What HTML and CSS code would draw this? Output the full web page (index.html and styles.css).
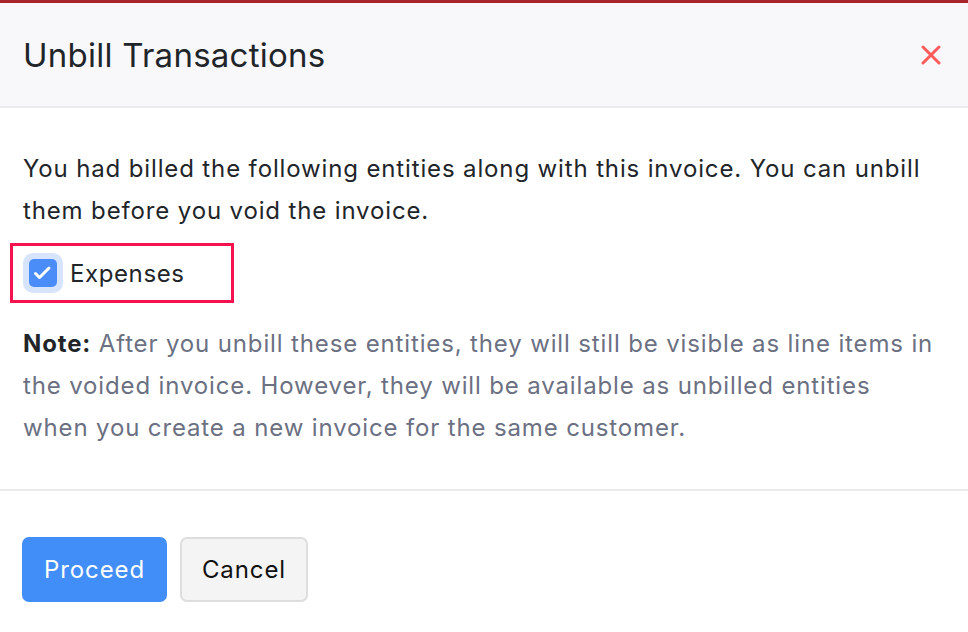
FILE: index.html
```html
<!DOCTYPE html>
<html lang="en">
<head>
    <meta charset="UTF-8">
    <title>Unbill Transactions</title>
    <link rel="stylesheet" href="styles.css">
</head>
<body>
    <div class="top-bar"></div>
    <header class="modal-header">
        <h1>Unbill Transactions</h1>
        <button class="close-btn" aria-label="Close">
            <svg width="20" height="20" viewBox="0 0 20 20"><path d="M2 2L18 18M18 2L2 18" stroke="#ff5a5a" stroke-width="3" stroke-linecap="round"/></svg>
        </button>
    </header>
    <main class="modal-body">
        <p>You had billed the following entities along with this invoice. You can unbill them before you void the invoice.</p>
        <label class="check-row">
            <span class="check-outer">
                <span class="check-inner">
                    <svg width="28" height="28" viewBox="0 0 28 28"><path d="M6.5 14.5L10.5 18.5L20 9" fill="none" stroke="#fff" stroke-width="3" stroke-linecap="round" stroke-linejoin="round"/></svg>
                </span>
            </span>
            Expenses
        </label>
        <p class="note"><strong>Note:</strong> After you unbill these entities, they will still be visible as line items in the voided invoice. However, they will be available as unbilled entities when you create a new invoice for the same customer.</p>
    </main>
    <footer class="modal-footer">
        <button class="btn btn-primary">Proceed</button>
        <button class="btn btn-default">Cancel</button>
    </footer>
</body>
</html>
```

FILE: styles.css
```css
body {
    margin: 0;
    font-family: 'Inter', 'Noto Sans', sans-serif;
    color: #212529;
    background: #fff;
    letter-spacing: 0.86px;
}

.top-bar {
    height: 3px;
    background-color: #a8242a;
}

/* Header */
.modal-header {
    height: 103px;
    background-color: #f8f8fa;
    border-bottom: 2px solid #ebebeb;
    display: flex;
    align-items: center;
    justify-content: space-between;
    padding: 0 23px;
}

.modal-header h1 {
    margin: 0;
    font-size: 33px;
    font-weight: 400;
    letter-spacing: 0.25px;
    color: #212529;
}

.close-btn {
    background: none;
    border: none;
    padding: 0;
    margin-right: 4px;
    cursor: pointer;
    display: flex;
}

/* Body */
.modal-body {
    padding: 40px 30px 40px 23px;
    border-bottom: 2px solid #ebebeb;
}

.modal-body p {
    margin: 0;
    font-size: 24px;
    line-height: 42px;
}

.check-row {
    display: inline-flex;
    align-items: center;
    gap: 7px;
    margin: 11px 0 20px -13px;
    padding: 0 46px 0 10px;
    height: 54px;
    border: 3px solid #f5124f;
    font-size: 24px;
    letter-spacing: 0.6px;
}

.check-outer {
    width: 40px;
    height: 40px;
    border-radius: 10px;
    background-color: #d6e4fd;
    display: flex;
    align-items: center;
    justify-content: center;
}

.check-inner {
    width: 28px;
    height: 28px;
    border-radius: 5px;
    background-color: #4a8df8;
    display: flex;
}

.modal-body .note {
    color: #6b7082;
}

.note strong {
    color: #212529;
    font-weight: 700;
}

/* Footer */
.modal-footer {
    padding: 46px 22px;
    display: flex;
    gap: 13px;
}

.btn {
    height: 65px;
    font-family: inherit;
    font-size: 24px;
    letter-spacing: 0.9px;
    border-radius: 7px;
    cursor: pointer;
}

.btn-primary {
    width: 145px;
    background-color: #428ef8;
    border: none;
    color: #fff;
}

.btn-default {
    width: 128px;
    background-color: #f4f4f4;
    border: 2px solid #dedede;
    color: #111;
}
```
